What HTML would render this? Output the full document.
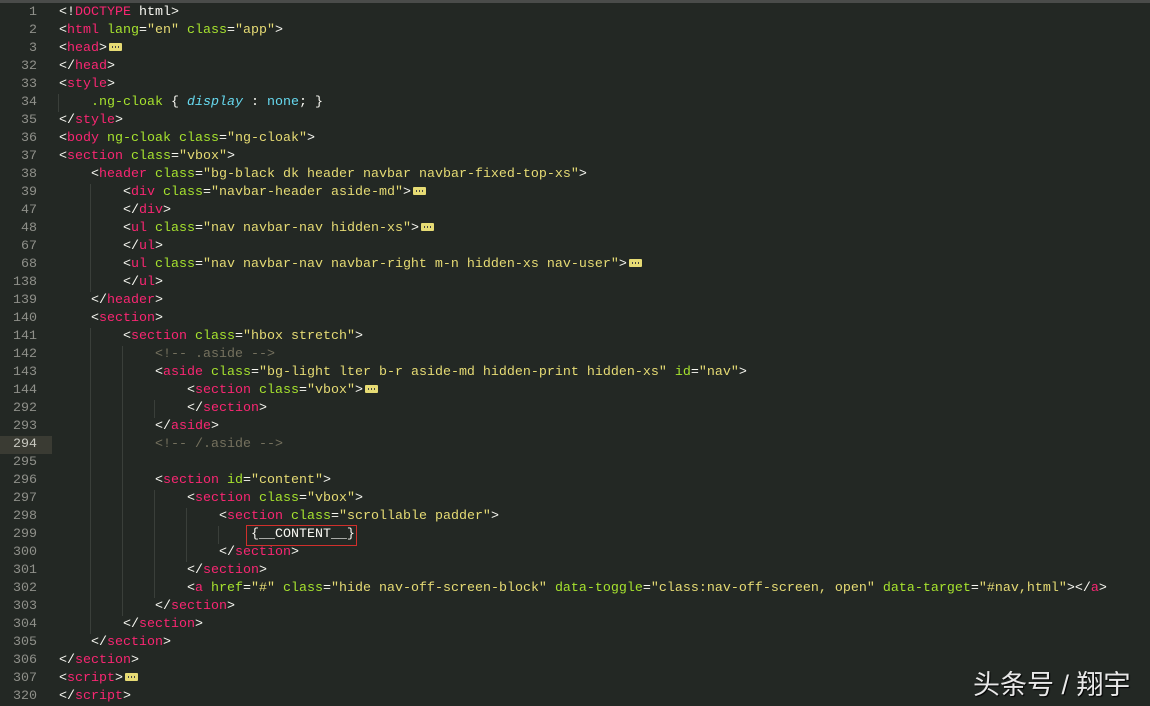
<!DOCTYPE html>
<html><head><meta charset="utf-8"><style>
body{margin:0;width:1150px;height:705px;background:#232824;overflow:hidden;position:relative;font-family:"Liberation Mono",monospace;font-size:13.33px;color:#f8f8f2}
.top{position:absolute;left:0;top:0;width:1150px;height:3px;background:#4a4c4a}
.l{position:absolute;left:0;height:18px;line-height:18px;white-space:pre;width:1150px}
.n{position:absolute;left:0;width:37px;text-align:right;color:#8f908a}
.c{position:absolute;left:59px}
.hl .n{background:#3a3b33;width:52px;padding-right:15px;box-sizing:border-box;text-align:right;color:#c8c8c0}
.t{color:#f92672}.a{color:#a6e22e}.s{color:#e6db74}.cm{color:#75715e}.k{color:#66d9ef;font-style:italic}.v{color:#66d9ef}
.f{display:inline-block;width:13px;height:8px;background:#e6db74;border-radius:1px;vertical-align:-0px;margin-left:2px;position:relative}
.f:after{content:"";position:absolute;left:3px;top:3px;width:7px;height:2px;background:repeating-linear-gradient(90deg,#444 0 1px,transparent 1px 3px)}
.g{position:absolute;width:1px;background:#3a3f3a}
.box{position:absolute;left:246px;top:525px;width:111px;height:21px;border:1px solid #d0302c;box-sizing:border-box}
.wm{position:absolute;left:973px;top:663px;font-family:"Liberation Sans","Noto Sans CJK SC",sans-serif;font-size:27px;color:#e8e8e8;text-shadow:1px 1px 1px #000}
</style></head><body>
<div class="top"></div>
<div class="g" style="left:58px;top:94px;height:18px"></div>
<div class="g" style="left:90px;top:184px;height:108px"></div>
<div class="g" style="left:90px;top:328px;height:306px"></div>
<div class="g" style="left:122px;top:346px;height:270px"></div>
<div class="g" style="left:154px;top:400px;height:18px"></div>
<div class="g" style="left:154px;top:490px;height:108px"></div>
<div class="g" style="left:186px;top:508px;height:54px"></div>
<div class="g" style="left:218px;top:526px;height:18px"></div>
<div class="l" style="top:4px"><span class="n">1</span><span class="c">&lt;!<span class="t">DOCTYPE</span> html&gt;</span></div>
<div class="l" style="top:22px"><span class="n">2</span><span class="c">&lt;<span class="t">html</span> <span class="a">lang</span>=<span class="s">"en"</span> <span class="a">class</span>=<span class="s">"app"</span>&gt;</span></div>
<div class="l" style="top:40px"><span class="n">3</span><span class="c">&lt;<span class="t">head</span>&gt;<span class="f"></span></span></div>
<div class="l" style="top:58px"><span class="n">32</span><span class="c">&lt;/<span class="t">head</span>&gt;</span></div>
<div class="l" style="top:76px"><span class="n">33</span><span class="c">&lt;<span class="t">style</span>&gt;</span></div>
<div class="l" style="top:94px"><span class="n">34</span><span class="c">    <span class="a">.ng-cloak</span> { <span class="k">display</span> : <span class="v">none</span>; }</span></div>
<div class="l" style="top:112px"><span class="n">35</span><span class="c">&lt;/<span class="t">style</span>&gt;</span></div>
<div class="l" style="top:130px"><span class="n">36</span><span class="c">&lt;<span class="t">body</span> <span class="a">ng-cloak</span> <span class="a">class</span>=<span class="s">"ng-cloak"</span>&gt;</span></div>
<div class="l" style="top:148px"><span class="n">37</span><span class="c">&lt;<span class="t">section</span> <span class="a">class</span>=<span class="s">"vbox"</span>&gt;</span></div>
<div class="l" style="top:166px"><span class="n">38</span><span class="c">    &lt;<span class="t">header</span> <span class="a">class</span>=<span class="s">"bg-black dk header navbar navbar-fixed-top-xs"</span>&gt;</span></div>
<div class="l" style="top:184px"><span class="n">39</span><span class="c">        &lt;<span class="t">div</span> <span class="a">class</span>=<span class="s">"navbar-header aside-md"</span>&gt;<span class="f"></span></span></div>
<div class="l" style="top:202px"><span class="n">47</span><span class="c">        &lt;/<span class="t">div</span>&gt;</span></div>
<div class="l" style="top:220px"><span class="n">48</span><span class="c">        &lt;<span class="t">ul</span> <span class="a">class</span>=<span class="s">"nav navbar-nav hidden-xs"</span>&gt;<span class="f"></span></span></div>
<div class="l" style="top:238px"><span class="n">67</span><span class="c">        &lt;/<span class="t">ul</span>&gt;</span></div>
<div class="l" style="top:256px"><span class="n">68</span><span class="c">        &lt;<span class="t">ul</span> <span class="a">class</span>=<span class="s">"nav navbar-nav navbar-right m-n hidden-xs nav-user"</span>&gt;<span class="f"></span></span></div>
<div class="l" style="top:274px"><span class="n">138</span><span class="c">        &lt;/<span class="t">ul</span>&gt;</span></div>
<div class="l" style="top:292px"><span class="n">139</span><span class="c">    &lt;/<span class="t">header</span>&gt;</span></div>
<div class="l" style="top:310px"><span class="n">140</span><span class="c">    &lt;<span class="t">section</span>&gt;</span></div>
<div class="l" style="top:328px"><span class="n">141</span><span class="c">        &lt;<span class="t">section</span> <span class="a">class</span>=<span class="s">"hbox stretch"</span>&gt;</span></div>
<div class="l" style="top:346px"><span class="n">142</span><span class="c">            <span class="cm">&lt;!-- .aside --&gt;</span></span></div>
<div class="l" style="top:364px"><span class="n">143</span><span class="c">            &lt;<span class="t">aside</span> <span class="a">class</span>=<span class="s">"bg-light lter b-r aside-md hidden-print hidden-xs"</span> <span class="a">id</span>=<span class="s">"nav"</span>&gt;</span></div>
<div class="l" style="top:382px"><span class="n">144</span><span class="c">                &lt;<span class="t">section</span> <span class="a">class</span>=<span class="s">"vbox"</span>&gt;<span class="f"></span></span></div>
<div class="l" style="top:400px"><span class="n">292</span><span class="c">                &lt;/<span class="t">section</span>&gt;</span></div>
<div class="l" style="top:418px"><span class="n">293</span><span class="c">            &lt;/<span class="t">aside</span>&gt;</span></div>
<div class="l hl" style="top:436px"><span class="n">294</span><span class="c">            <span class="cm">&lt;!-- /.aside --&gt;</span></span></div>
<div class="l" style="top:454px"><span class="n">295</span><span class="c"></span></div>
<div class="l" style="top:472px"><span class="n">296</span><span class="c">            &lt;<span class="t">section</span> <span class="a">id</span>=<span class="s">"content"</span>&gt;</span></div>
<div class="l" style="top:490px"><span class="n">297</span><span class="c">                &lt;<span class="t">section</span> <span class="a">class</span>=<span class="s">"vbox"</span>&gt;</span></div>
<div class="l" style="top:508px"><span class="n">298</span><span class="c">                    &lt;<span class="t">section</span> <span class="a">class</span>=<span class="s">"scrollable padder"</span>&gt;</span></div>
<div class="l" style="top:526px"><span class="n">299</span><span class="c">                        {__CONTENT__}</span></div>
<div class="l" style="top:544px"><span class="n">300</span><span class="c">                    &lt;/<span class="t">section</span>&gt;</span></div>
<div class="l" style="top:562px"><span class="n">301</span><span class="c">                &lt;/<span class="t">section</span>&gt;</span></div>
<div class="l" style="top:580px"><span class="n">302</span><span class="c">                &lt;<span class="t">a</span> <span class="a">href</span>=<span class="s">"#"</span> <span class="a">class</span>=<span class="s">"hide nav-off-screen-block"</span> <span class="a">data-toggle</span>=<span class="s">"class:nav-off-screen, open"</span> <span class="a">data-target</span>=<span class="s">"#nav,html"</span>&gt;&lt;/<span class="t">a</span>&gt;</span></div>
<div class="l" style="top:598px"><span class="n">303</span><span class="c">            &lt;/<span class="t">section</span>&gt;</span></div>
<div class="l" style="top:616px"><span class="n">304</span><span class="c">        &lt;/<span class="t">section</span>&gt;</span></div>
<div class="l" style="top:634px"><span class="n">305</span><span class="c">    &lt;/<span class="t">section</span>&gt;</span></div>
<div class="l" style="top:652px"><span class="n">306</span><span class="c">&lt;/<span class="t">section</span>&gt;</span></div>
<div class="l" style="top:670px"><span class="n">307</span><span class="c">&lt;<span class="t">script</span>&gt;<span class="f"></span></span></div>
<div class="l" style="top:688px"><span class="n">320</span><span class="c">&lt;/<span class="t">script</span>&gt;</span></div>
<div class="box"></div>
<div class="wm">头条号 / 翔宇</div>
</body></html>
